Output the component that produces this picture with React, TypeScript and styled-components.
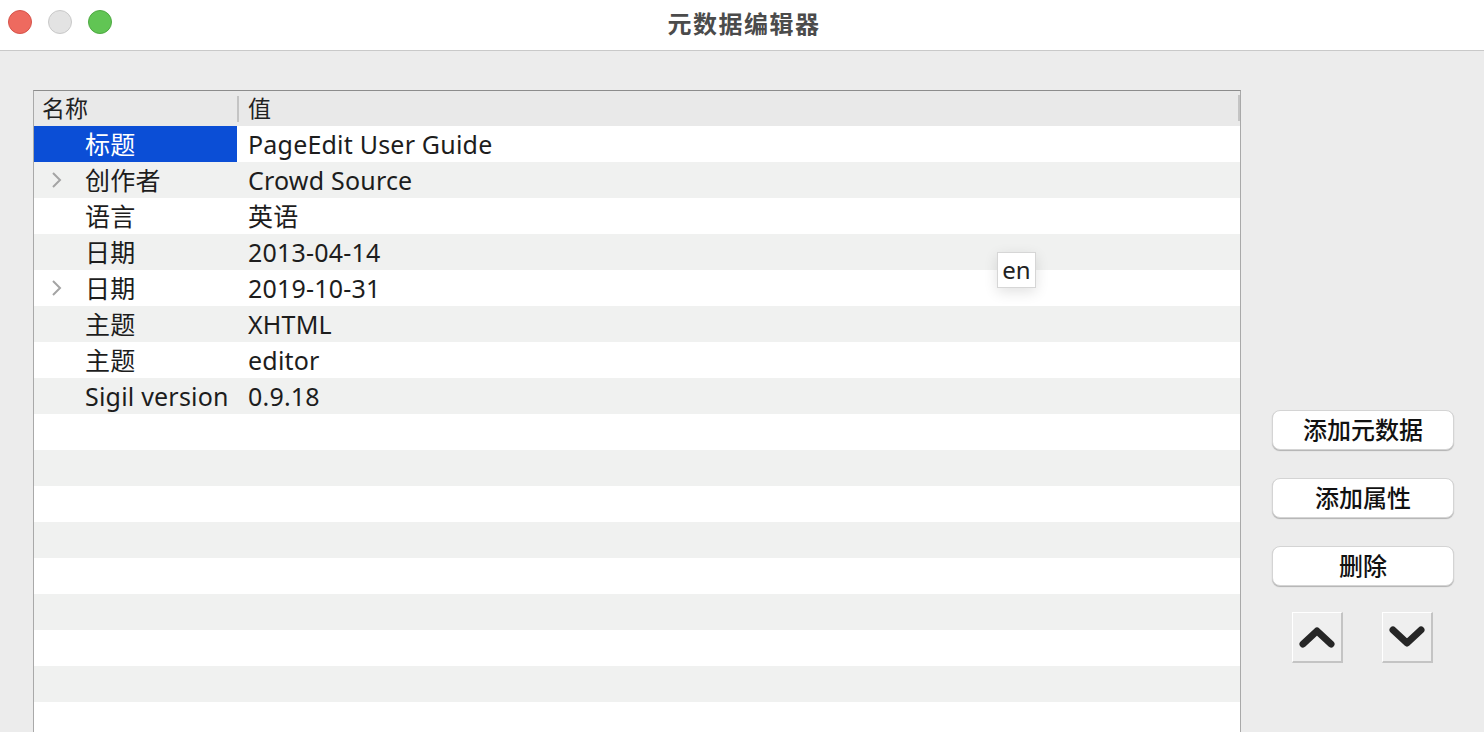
import React from 'react';
import styled, { createGlobalStyle } from 'styled-components';

const GlobalStyle = createGlobalStyle`
  html, body {
    margin: 0;
    padding: 0;
    background: #ececec;
    overflow: hidden;
  }
  body {
    font-family: "Noto Sans", "Noto Sans CJK SC", sans-serif;
  }
`;

type Row = { name: string; value: string; expandable?: boolean; selected?: boolean };

const rows: Row[] = [
  { name: '标题', value: 'PageEdit User Guide', selected: true },
  { name: '创作者', value: 'Crowd Source', expandable: true },
  { name: '语言', value: '英语' },
  { name: '日期', value: '2013-04-14' },
  { name: '日期', value: '2019-10-31', expandable: true },
  { name: '主题', value: 'XHTML' },
  { name: '主题', value: 'editor' },
  { name: 'Sigil version', value: '0.9.18' },
];

const EMPTY_ROWS = 9;

function App() {
  return (
    <Window>
      <GlobalStyle />
      <TitleBar>
        <Lights>
          <Light color="#ee6a5f" edge="#d6534a" />
          <Light color="#e3e3e3" edge="#c9c9c9" />
          <Light color="#61c554" edge="#4ea942" />
        </Lights>
        <Title>元数据编辑器</Title>
      </TitleBar>
      <Body>
        <Table>
          <Header>
            <HeaderCell>名称</HeaderCell>
            <HeaderCell divider>值</HeaderCell>
            <ResizeGrip />
          </Header>
          {rows.map((r, i) => (
            <DataRow key={i} alt={i % 2 === 1}>
              <NameCell selected={r.selected}>
                <Toggle>
                  {r.expandable && (
                    <svg width="12" height="18" viewBox="0 0 12 18">
                      <polyline points="2,2 9,9 2,16" fill="none" stroke="#a4a4a4" strokeWidth="2" />
                    </svg>
                  )}
                </Toggle>
                {r.name}
              </NameCell>
              <ValueCell>{r.value}</ValueCell>
            </DataRow>
          ))}
          {Array.from({ length: EMPTY_ROWS }).map((_, i) => (
            <DataRow key={`e${i}`} alt={(rows.length + i) % 2 === 1} />
          ))}
          <Tooltip>en</Tooltip>
        </Table>
        <Side>
          <PushButton>添加元数据</PushButton>
          <PushButton>添加属性</PushButton>
          <PushButton>删除</PushButton>
          <ArrowRow>
            <ArrowButton>
              <svg width="36" height="24" viewBox="0 0 36 24">
                <polyline points="4,19 18,6 32,19" fill="none" stroke="#262626" strokeWidth="7" strokeLinecap="round" strokeLinejoin="round" />
              </svg>
            </ArrowButton>
            <ArrowButton>
              <svg width="36" height="24" viewBox="0 0 36 24">
                <polyline points="4,5 18,18 32,5" fill="none" stroke="#262626" strokeWidth="7" strokeLinecap="round" strokeLinejoin="round" />
              </svg>
            </ArrowButton>
          </ArrowRow>
        </Side>
      </Body>
    </Window>
  );
}

const Window = styled.div`
  width: 1484px;
  height: 732px;
  display: flex;
  flex-direction: column;
  overflow: hidden;
`;

const TitleBar = styled.div`
  height: 50px;
  flex: none;
  background: #ffffff;
  border-bottom: 1px solid #c9c9c9;
  display: flex;
  align-items: center;
`;

const Lights = styled.div`
  display: flex;
  gap: 16px;
  padding-left: 8px;
  margin-top: -6px;
`;

const Light = styled.div<{ color: string; edge: string }>`
  width: 24px;
  height: 24px;
  border-radius: 50%;
  box-sizing: border-box;
  background: ${(p) => p.color};
  border: 1px solid ${(p) => p.edge};
`;

const Title = styled.div`
  flex: 1;
  text-align: center;
  margin-left: -108px;
  margin-top: -6px;
  font-family: "Noto Sans CJK SC", sans-serif;
  font-weight: 700;
  font-size: 24px;
  letter-spacing: 1.5px;
  color: #4b4b4b;
`;

const Body = styled.div`
  flex: 1;
  display: flex;
  align-items: flex-start;
  padding: 39px 0 0 33px;
`;

const Table = styled.div`
  position: relative;
  width: 1206px;
  height: 700px;
  flex: none;
  background: #ffffff;
  border-top: 1px solid #8c8c8c;
  border-left: 1px solid #a9a9a9;
  border-right: 1px solid #a9a9a9;
`;

const Header = styled.div`
  height: 35px;
  display: grid;
  grid-template-columns: 203px 1fr;
  background: #e9e9e9;
  position: relative;
`;

const HeaderCell = styled.div<{ divider?: boolean }>`
  display: flex;
  align-items: center;
  padding-left: ${(p) => (p.divider ? '11px' : '8px')};
  font-size: 23px;
  line-height: 1;
  color: #222;
  position: relative;
  &::before {
    content: '';
    display: ${(p) => (p.divider ? 'block' : 'none')};
    position: absolute;
    left: 0;
    top: 5px;
    width: 2px;
    height: 26px;
    background: #c4c4c4;
  }
`;

const ResizeGrip = styled.div`
  position: absolute;
  right: 0;
  top: 4px;
  width: 2px;
  height: 26px;
  background: #c4c4c4;
`;

const DataRow = styled.div<{ alt?: boolean }>`
  height: 36px;
  display: grid;
  grid-template-columns: 203px 1fr;
  background: ${(p) => (p.alt ? '#f0f1f0' : '#ffffff')};
`;

const NameCell = styled.div<{ selected?: boolean }>`
  display: flex;
  align-items: center;
  font-size: 25px;
  letter-spacing: 0.2px;
  line-height: 1;
  color: ${(p) => (p.selected ? '#ffffff' : '#1d1d1d')};
  background: ${(p) => (p.selected ? '#0b4ed6' : 'transparent')};
  white-space: nowrap;
`;

const Toggle = styled.span`
  width: 51px;
  flex: none;
  display: flex;
  align-items: center;
  padding-left: 17px;
  box-sizing: border-box;
`;

const ValueCell = styled.div`
  display: flex;
  align-items: center;
  padding-left: 11px;
  font-size: 25px;
  letter-spacing: 0.2px;
  line-height: 1;
  color: #1d1d1d;
  white-space: nowrap;
`;

const Tooltip = styled.div`
  position: absolute;
  left: 963px;
  top: 161px;
  width: 39px;
  height: 36px;
  box-sizing: border-box;
  background: #ffffff;
  border: 1px solid #d6d6d6;
  box-shadow: 0 4px 14px rgba(0, 0, 0, 0.12);
  display: flex;
  align-items: center;
  justify-content: center;
  font-size: 24px;
  line-height: 1;
  color: #222;
`;

const Side = styled.div`
  margin-left: 31px;
  padding-top: 320px;
  display: flex;
  flex-direction: column;
  gap: 28px;
`;

const PushButton = styled.div`
  width: 182px;
  height: 40px;
  box-sizing: border-box;
  background: #ffffff;
  border-radius: 8px;
  border: 1px solid #d4d4d4;
  box-shadow: 0 1px 1px rgba(0, 0, 0, 0.25);
  display: flex;
  align-items: center;
  justify-content: center;
  padding-bottom: 3px;
  font-family: "Noto Sans CJK SC", sans-serif;
  font-size: 24px;
  font-weight: 500;
  color: #111;
`;

const ArrowRow = styled.div`
  display: flex;
  gap: 39px;
  padding-left: 20px;
  margin-top: -2px;
`;

const ArrowButton = styled.div`
  width: 51px;
  height: 51px;
  box-sizing: border-box;
  background: #efefef;
  border: 1px solid #ffffff;
  border-right: 2px solid #c4c4c4;
  border-bottom: 2px solid #c4c4c4;
  display: flex;
  align-items: center;
  justify-content: center;
`;

export default App;
